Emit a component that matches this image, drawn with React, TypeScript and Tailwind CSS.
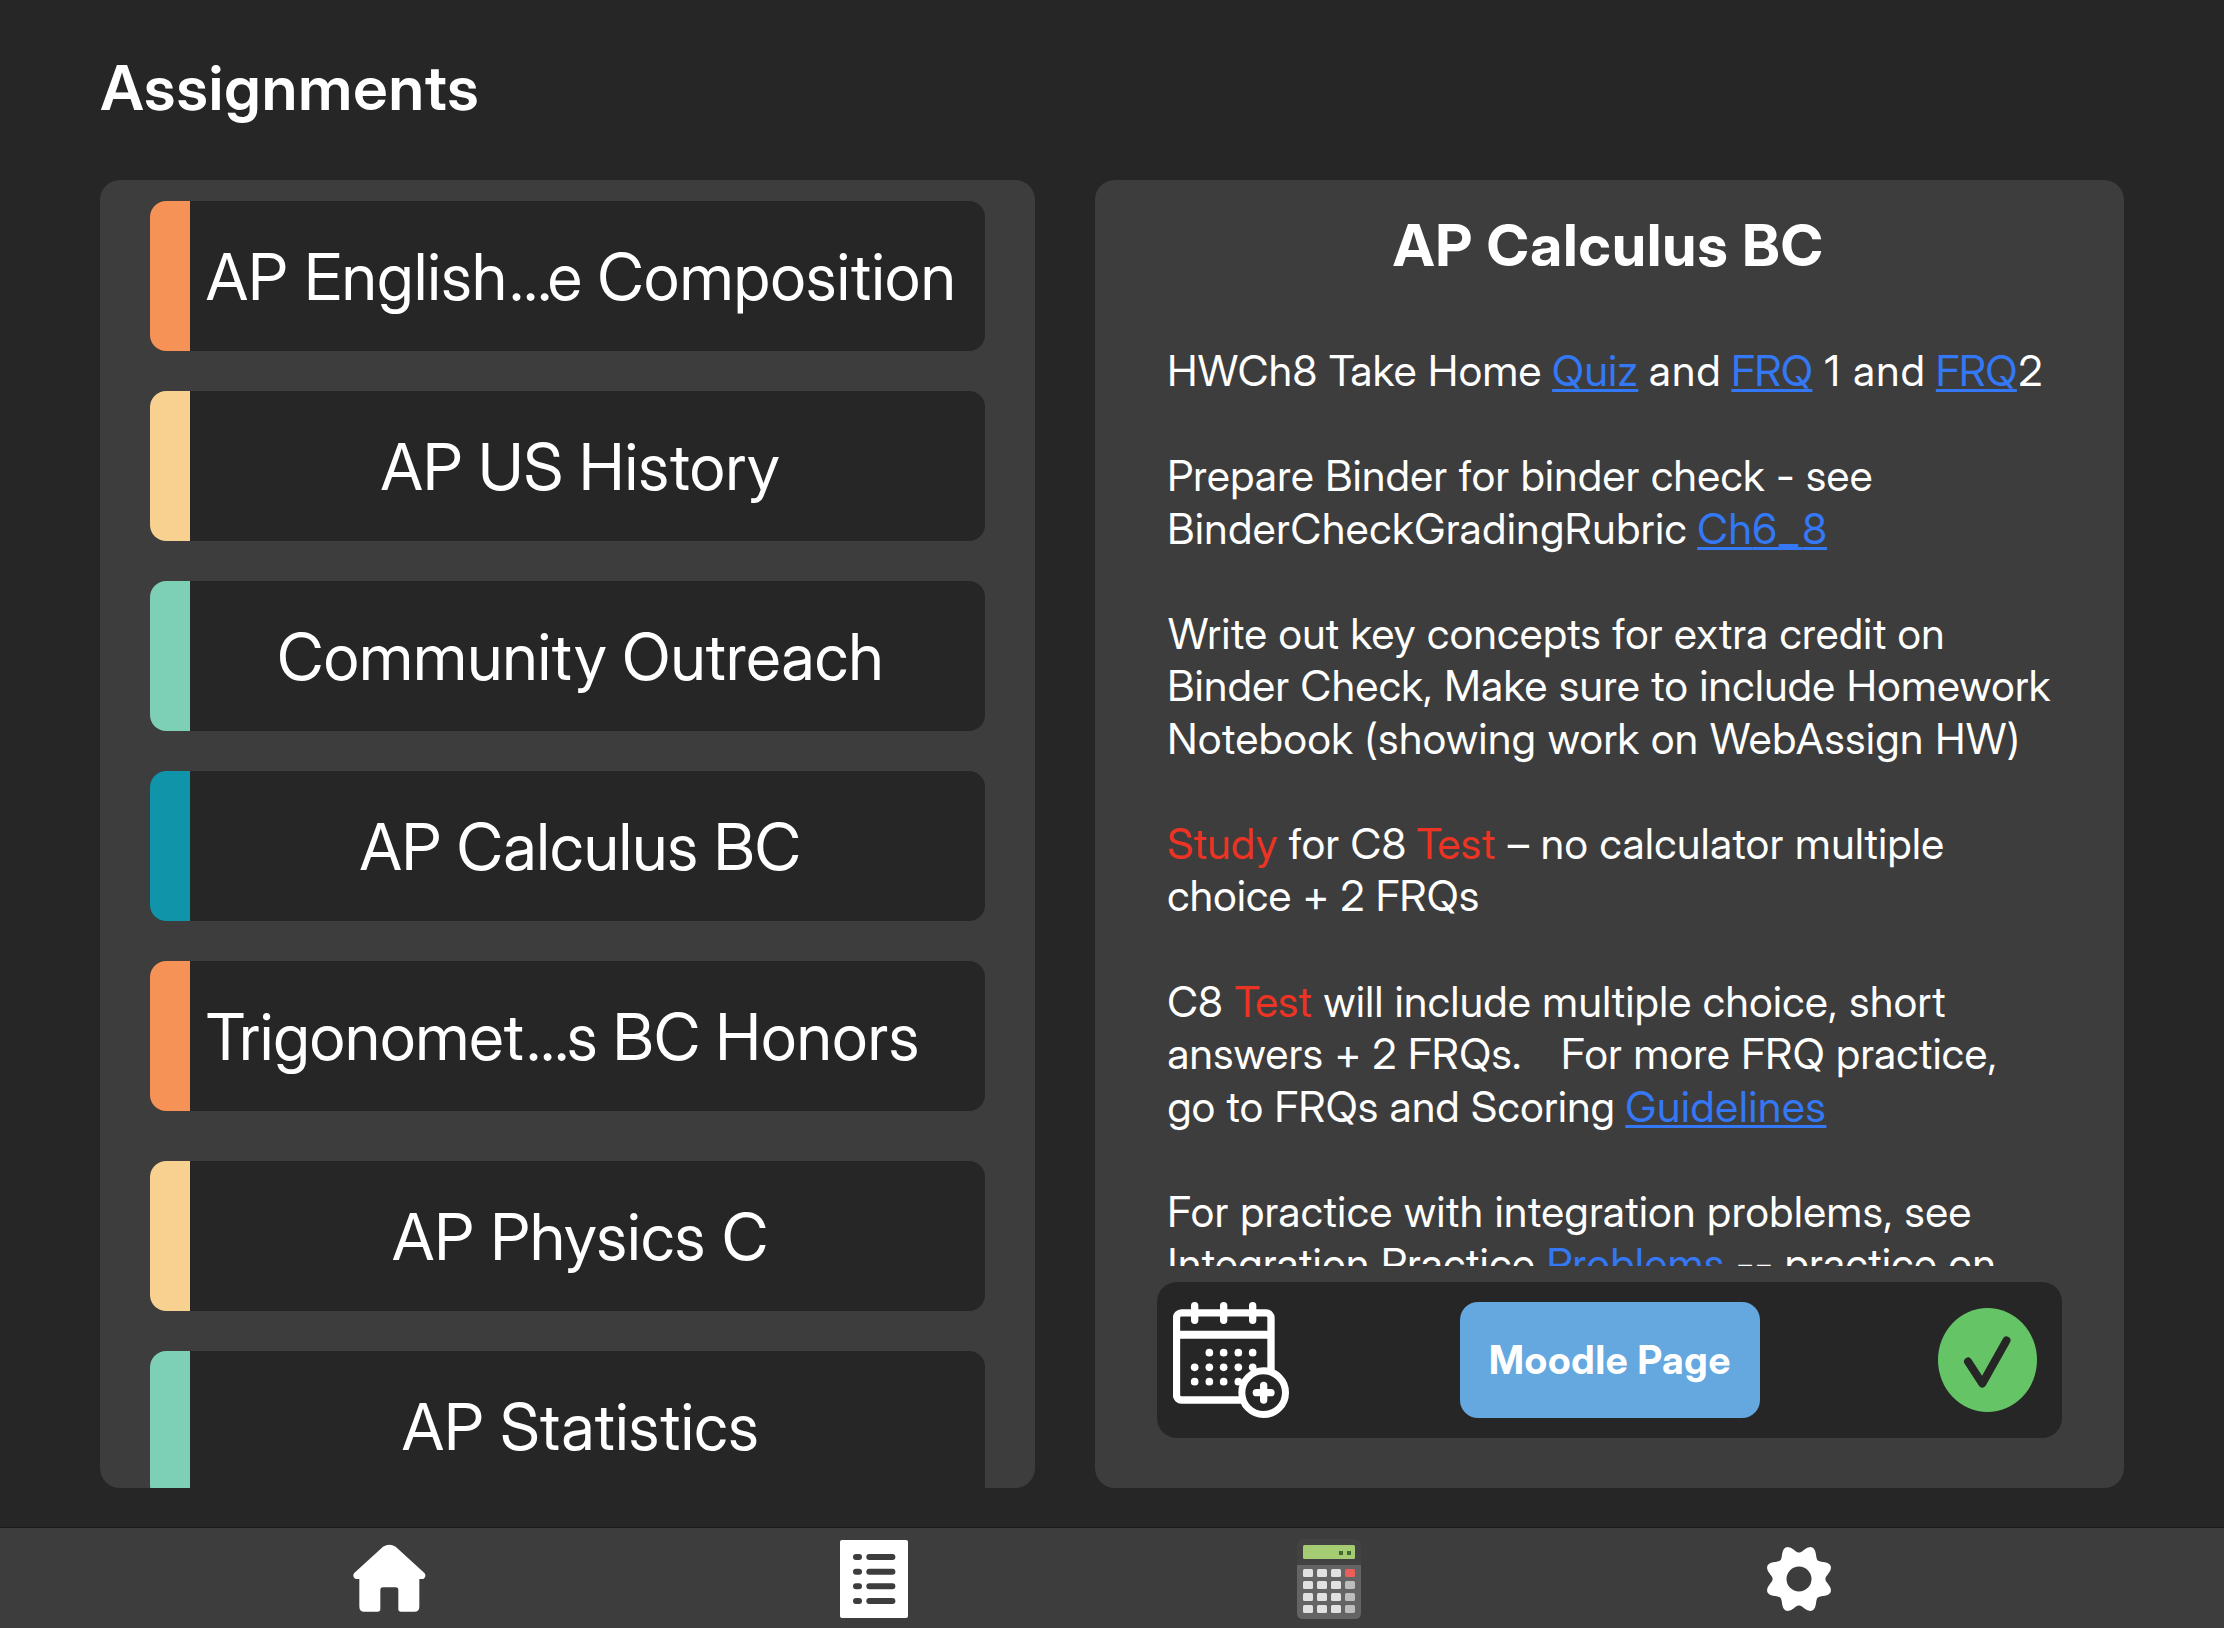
import type { ReactNode } from 'react'
import clsx from 'clsx'

type Course = { name: ReactNode; key: string; strip: string; text?: string; gap?: string }

const courses: Course[] = [
  {
    key: 'english',
    strip: 'bg-[#f79256]',
    name: (
      <>
        <span className="tracking-[0.45px]">AP English</span>
        <span className="ml-[2px]">…</span>
        <span className="-ml-[4px] tracking-[0.45px] [word-spacing:-1.5px]">e Composition</span>
      </>
    ),
  },
  { key: 'history', strip: 'bg-[#f8d190]', name: 'AP US History', text: 'tracking-[0.5px] [word-spacing:-1px]' },
  { key: 'outreach', strip: 'bg-[#7dcfb6]', name: 'Community Outreach', text: 'tracking-[0.3px] [word-spacing:-1px]' },
  { key: 'calculus', strip: 'bg-[#1094a9]', name: 'AP Calculus BC', text: 'tracking-[0.2px] [word-spacing:-0.5px]' },
  {
    key: 'trig',
    strip: 'bg-[#f79256]',
    text: 'text-left',
    gap: 'mb-[50px]',
    name: (
      <>
        <span className="tracking-[0.15px]">Trigonomet</span>
        <span className="ml-[2.7px]">…</span>
        <span className="-ml-[1.6px] tracking-[0.4px] [word-spacing:-1.5px]">s BC Honors</span>
      </>
    ),
  },
  { key: 'physics', strip: 'bg-[#f8d190]', name: 'AP Physics C', text: 'tracking-[0.42px]' },
  { key: 'statistics', strip: 'bg-[#7dcfb6]', name: 'AP Statistics', text: 'tracking-[0.45px]' },
]

function CourseRow({ name, strip, text, gap }: Course) {
  return (
    <div className={clsx('flex h-[150px] shrink-0 overflow-hidden rounded-[16px] bg-[#262626]', gap ?? 'mb-10')}>
      <div className={clsx('w-10 shrink-0', strip)} />
      <div className={clsx('ml-4 w-[749px] whitespace-pre text-center text-[64px] leading-[152px]', text)}>{name}</div>
    </div>
  )
}

function Line({ children, className }: { children?: ReactNode; className?: string }) {
  return <div className={clsx('h-[52.56px] whitespace-pre leading-[52.56px]', className)}>{children}</div>
}

function Link({ children, className }: { children: ReactNode; className?: string }) {
  return (
    <a className={clsx('text-[#3478f6] underline decoration-[3px] underline-offset-[3px]', className)}>{children}</a>
  )
}

function Red({ children, className }: { children: ReactNode; className?: string }) {
  return <span className={clsx('text-[#ed3323]', className)}>{children}</span>
}

function CalendarIcon() {
  const dots = [
    [338, [208, 251, 295, 338]],
    [382, [164, 208, 251, 295, 338]],
    [425, [164, 208, 251, 295]],
  ] as [number, number[]][]
  return (
    <svg className="h-[116px] w-[116px] shrink-0" viewBox="99 186 348 348" fill="none" stroke="#fff">
      <rect x="109.5" y="218.5" width="283.5" height="261.5" rx="15" strokeWidth="22" />
      <path d="M110 284.5H393" strokeWidth="24" />
      <path d="M164 197V241M251 197V241M338 197V241" strokeWidth="22" strokeLinecap="round" />
      {dots.map(([y, xs]) => xs.map((x) => <circle key={`${x}-${y}`} cx={x} cy={y} r="11.5" fill="#fff" stroke="none" />))}
      <circle cx="371" cy="458" r="65.5" fill="#262626" strokeWidth="21" />
      <path d="M349 458H393M371 436V480" strokeWidth="22" strokeLinecap="round" />
    </svg>
  )
}

function HomeIcon() {
  return (
    <svg className="h-[68px] w-[73px]" viewBox="68 102 219 204" fill="#fff">
      <path d="M158 110Q177 98 196 110L283 190Q289 200 279 207H267V290Q267 305 252 305H212Q204 305 204 297V240Q204 232 196 232H158Q150 232 150 240V297Q150 305 142 305H102Q87 305 87 290V207H76Q65 202 71 190Z" />
    </svg>
  )
}

function ListIcon() {
  return (
    <svg className="h-[78px] w-[68px]" viewBox="0 0 68 78">
      <rect width="68" height="78" rx="2" fill="#fff" />
      {[17, 31.7, 46.3, 61].map((y) => (
        <path key={y} d={`M16 ${y}H19M29.3 ${y}H52.4`} stroke="#3d3d3d" strokeWidth="6" strokeLinecap="round" />
      ))}
    </svg>
  )
}

function CalculatorIcon() {
  return (
    <svg className="h-20 w-16" viewBox="0 0 64 80">
      <path d="M0 26H64V74Q64 80 58 80H6Q0 80 0 74Z" fill="#646464" />
      <path d="M0 6Q0 0 6 0H58Q64 0 64 6V26H0Z" fill="#424242" />
      <rect x="6" y="6" width="52" height="14" rx="1.5" fill="#a5cc72" />
      <path d="M42 12h4v4h-4zM50 12h4v4h-4z" fill="#40692b" />
      {[30, 42, 54, 66].map((y, row) =>
        [6, 20, 34, 48].map((x, col) => (
          <rect
            key={`${x}-${y}`}
            x={x}
            y={y}
            width="10"
            height="8"
            rx="1.5"
            fill={col < 3 ? '#e1e1e1' : row === 0 ? '#ec5f59' : '#bdbdbd'}
          />
        )),
      )}
    </svg>
  )
}

// Eight rounded teeth traced as a cosine wave around the hub.
const gearPath =
  'M' +
  Array.from({ length: 240 }, (_, i) => {
    const a = (i / 240) * Math.PI * 2
    const r = 30.3 - 3.9 * Math.cos(8 * a)
    return `${(32 + r * Math.cos(a)).toFixed(2)} ${(32 + r * Math.sin(a)).toFixed(2)}`
  }).join('L') +
  'ZM44.5 32a12.5 12.5 0 1 0 -25 0a12.5 12.5 0 1 0 25 0Z'

function GearIcon() {
  return (
    <svg className="h-16 w-16 overflow-visible" viewBox="0 0 64 64">
      <path d={gearPath} fill="#fff" fillRule="evenodd" />
    </svg>
  )
}

export default function App() {
  return (
    <div className="flex h-[1628px] w-[2224px] flex-col overflow-hidden bg-[#262626] font-['Inter_Display','Inter',sans-serif] text-white">
      <h1 className="h-[180px] shrink-0 pl-[100.5px] text-[62px] font-semibold leading-[175px] tracking-[1.05px]">
        Assignments
      </h1>

      <main className="flex h-[1308px] shrink-0 gap-[60px] pl-[100px]">
        <section className="flex w-[935px] flex-col overflow-hidden rounded-[20px] bg-[#3d3d3d] px-[50px] pt-[21px]">
          {courses.map(({ key, ...course }) => (
            <CourseRow key={key} {...course} />
          ))}
        </section>

        <section className="flex w-[1029px] flex-col rounded-[20px] bg-[#3d3d3d]">
          <h2 className="h-[164.2px] shrink-0 pr-[2px] text-center text-[58px] font-bold leading-[131px] tracking-[1.13px]">
            AP Calculus BC
          </h2>

          <div className="h-[921.8px] shrink-0 overflow-hidden pl-[72.2px] pt-[0.8px] text-[42.5px] tracking-[0.44px]">
            <Line>
              <span>{'HWCh8 Take Home '}</span>
              <Link className="-ml-[0.7px] tracking-[0.5px]">Quiz</Link>
              <span className="-ml-[1.6px] tracking-[1.34px]">{' and '}</span>
              <Link className="-ml-[2.6px] tracking-[-0.4px]">FRQ</Link>
              <span className="ml-[0.4px] tracking-[1.2px]">{' 1 and '}</span>
              <Link className="-ml-[1.9px] tracking-[-0.4px]">FRQ</Link>
              <span className="ml-[1.7px]">2</span>
            </Line>
            <Line />
            <Line>Prepare Binder for binder check - see</Line>
            <Line>
              <span className="tracking-[0.63px]">{'BinderCheckGradingRubric '}</span>
              <Link className="-ml-[1.5px]">
                <span className="tracking-[0.6px]">Ch</span>
                <span className="tracking-[3.9px]">6_</span>
                <span className="tracking-normal">8</span>
              </Link>
            </Line>
            <Line />
            <Line className="pl-[0.8px] tracking-[0.41px]">Write out key concepts for extra credit on</Line>
            <Line className="tracking-[0.45px]">Binder Check, Make sure to include Homework</Line>
            <Line className="tracking-[0.63px]">Notebook (showing work on WebAssign HW)</Line>
            <Line />
            <Line>
              <Red className="tracking-[0.42px]">Study</Red>
              <span className="tracking-[0.36px]">{' for C8 '}</span>
              <Red className="-ml-[1.5px] tracking-[0.47px]">Test</Red>
              <span className="ml-[1.1px] tracking-[0.52px]">{' – no calculator multiple'}</span>
            </Line>
            <Line className="tracking-[0.32px]">choice + 2 FRQs</Line>
            <Line />
            <Line>
              <span className="tracking-[0.19px]">{'C8 '}</span>
              <Red className="ml-[0.5px] tracking-[-0.03px]">Test</Red>
              <span className="ml-[0.6px] tracking-[0.49px]">{' will include multiple choice, short'}</span>
            </Line>
            <Line>
              <span className="tracking-[0.42px]">{'answers + 2 FRQs.   '}</span>
              <span className="ml-[6px]">For more FRQ practice,</span>
            </Line>
            <Line className="pl-[0.2px]">
              <span className="tracking-[0.4px]">{'go to FRQs and Scoring '}</span>
              <Link className="-ml-[1px] tracking-[0.75px]">Guidelines</Link>
            </Line>
            <Line />
            <Line className="tracking-[0.54px]">For practice with integration problems, see</Line>
            <Line className="pl-[0.3px]">
              <span className="tracking-[0.55px]">{'Integration Practice '}</span>
              <Link className="tracking-[0.6px]">Problems</Link>
              <span className="tracking-[0.55px]">{' -- practice on'}</span>
            </Line>
          </div>

          <div className="ml-[62px] mt-4 flex h-[156px] w-[905px] shrink-0 items-center rounded-[20px] bg-[#262626] pl-4">
            <CalendarIcon />
            <button className="ml-[171px] h-[116px] w-[300px] rounded-[18px] bg-[#64a8df] text-[39px] font-bold leading-[116px] tracking-[0.76px]">
              Moodle Page
            </button>
            <svg className="ml-[178px] h-[104px] w-[99px]" viewBox="0 0 99 104">
              <ellipse cx="49.5" cy="52" rx="49.5" ry="52" fill="#65c466" />
              <path
                d="M30 53.5L44.3 75.5L68.5 32.5"
                fill="none"
                stroke="#262626"
                strokeWidth="8"
                strokeLinecap="round"
                strokeLinejoin="round"
              />
            </svg>
          </div>
        </section>
      </main>

      <nav className="mt-[39px] flex h-[101px] shrink-0 items-center border-t border-[#1b1b1b] bg-[#3d3d3d] pl-[353px] pt-[2px]">
        <div className="mb-[2px]">
          <HomeIcon />
        </div>
        <div className="ml-[414px]">
          <ListIcon />
        </div>
        <div className="ml-[389px]">
          <CalculatorIcon />
        </div>
        <div className="ml-[406px]">
          <GearIcon />
        </div>
      </nav>
    </div>
  )
}
